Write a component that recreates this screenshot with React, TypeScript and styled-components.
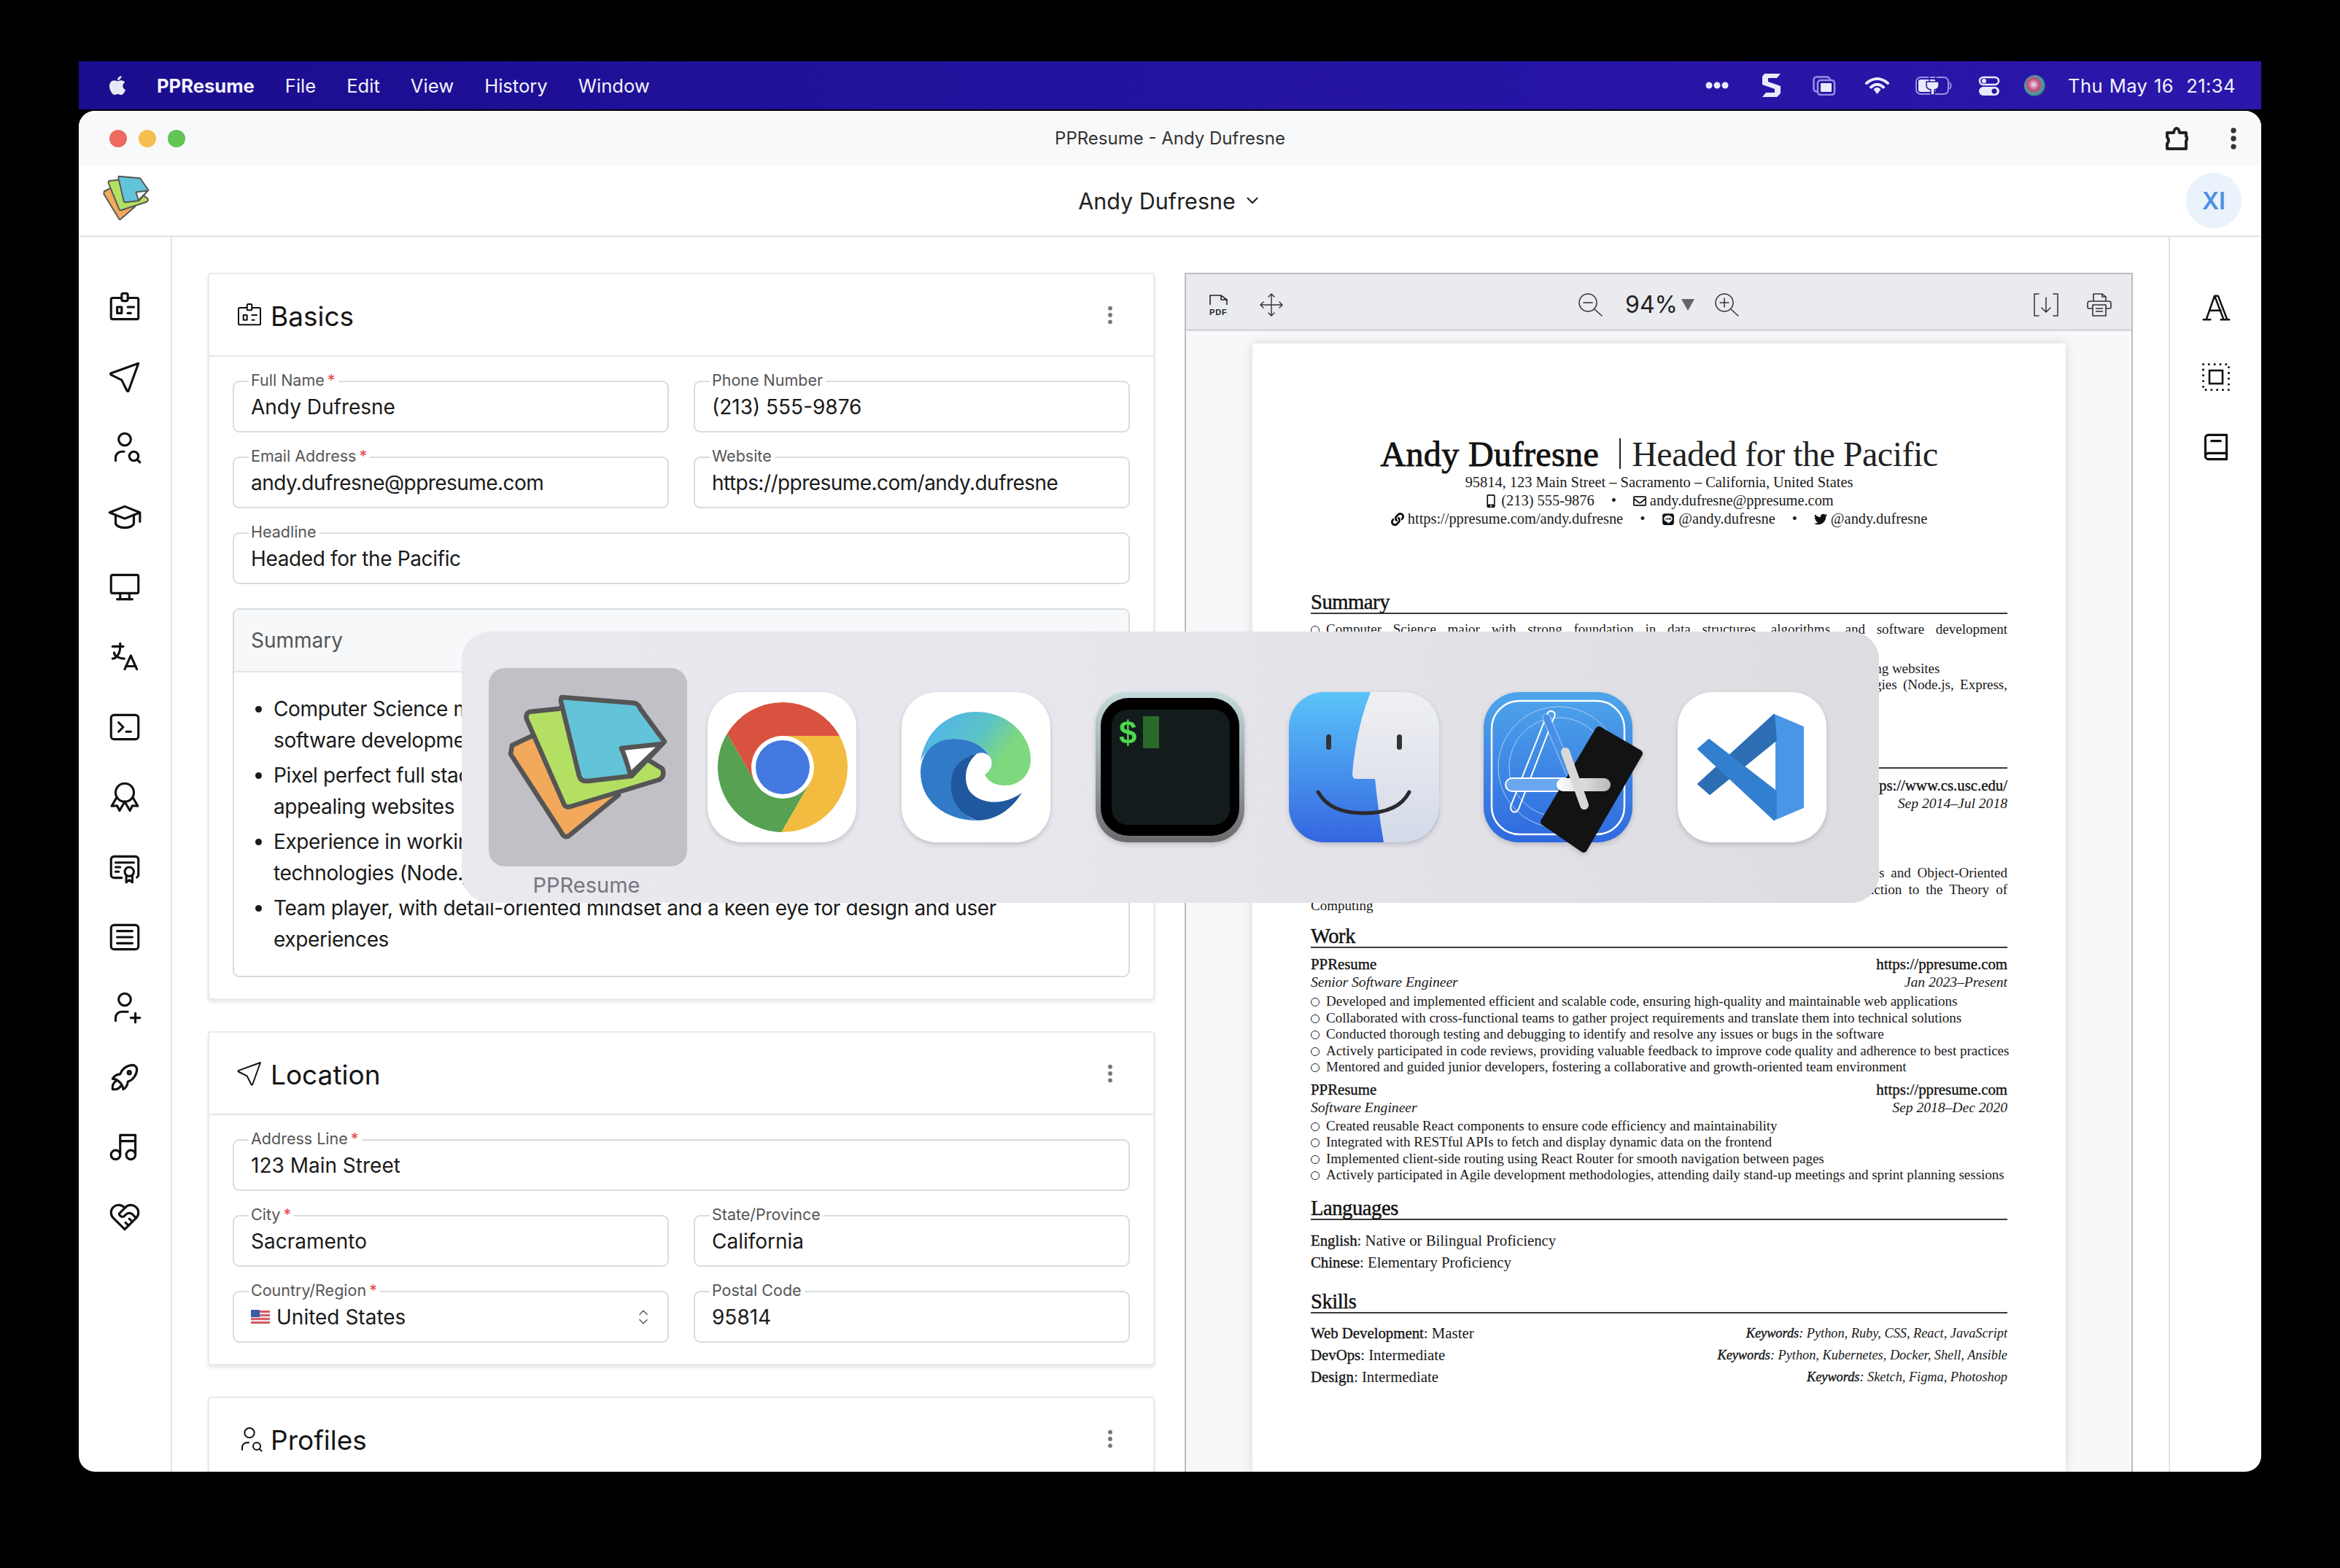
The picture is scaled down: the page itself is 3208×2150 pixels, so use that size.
import React from "react";
import styled, { createGlobalStyle } from "styled-components";
import { FaApple, FaLine, FaMobileAlt, FaRegEnvelope, FaTwitter, FaLink } from "react-icons/fa";
import {
  TbArticle,
  TbAward,
  TbBook2,
  TbCertificate,
  TbChevronDown,
  TbDeviceDesktop,
  TbDotsVertical,
  TbHeartHandshake,
  TbIdBadge2,
  TbLanguage,
  TbLocation,
  TbMusic,
  TbRocket,
  TbSchool,
  TbSelector,
  TbTerminal2,
  TbUserPlus,
  TbUserSearch,
} from "react-icons/tb";

const GlobalStyle = createGlobalStyle`
  html, body { margin: 0; padding: 0; background: #000; }
  * { box-sizing: border-box; }
`;

const Screen = styled.div`
  width: 3208px;
  height: 2150px;
  padding: 84px 108px 132px;
  background: #000;
  font-family: Inter, "Liberation Sans", sans-serif;
  display: flex;
  flex-direction: column;
  position: relative;
  overflow: hidden;
`;

/* mac menu bar */
const MenuBar = styled.div`
  height: 66px;
  flex: none;
  display: flex;
  align-items: center;
  padding: 0 35px 0 40px;
  background: linear-gradient(90deg, #1a0d8e 0%, #2314a0 50%, #2b17ab 100%);
  color: #f4f3fd;
  font-size: 25.6px;
`;

const AppleMark = styled.span`
  display: flex;
  width: 26px;
  margin-right: 41px;
  color: #e8e8f4;
  svg { display: block; }
`;

const MenuItem = styled.span<{ $bold?: boolean }>`
  margin-right: 42px;
  font-weight: ${(p) => (p.$bold ? 700 : 400)};
  white-space: nowrap;
`;

const StatusArea = styled.div`
  margin-left: auto;
  display: flex;
  align-items: center;
`;

const StatusSlot = styled.span<{ $gap: number }>`
  display: flex;
  margin-left: ${(p) => p.$gap}px;
  svg { display: block; }
`;

const Clock = styled.span`
  margin-left: 31px;
  white-space: nowrap;
  word-spacing: 1px;
  letter-spacing: 0.4px;
`;

/* app window */
const Window = styled.div`
  margin-top: 2px;
  flex: 1;
  min-height: 0;
  background: #fff;
  border-radius: 22px;
  overflow: hidden;
  display: flex;
  flex-direction: column;
`;

const TitleBar = styled.div`
  height: 75px;
  flex: none;
  background: #f8f9fa;
  display: grid;
  grid-template-columns: 1fr auto 1fr;
  align-items: center;
  padding: 0 42px;
`;

const Lights = styled.div`
  display: flex;
  gap: 16px;
`;

const Light = styled.span<{ $color: string }>`
  width: 24px;
  height: 24px;
  border-radius: 50%;
  background: ${(p) => p.$color};
`;

const WindowTitle = styled.div`
  font-size: 24px;
  color: #333;
  white-space: nowrap;
`;

const TitleActions = styled.div`
  display: flex;
  justify-content: flex-end;
  align-items: center;
  gap: 43px;
  margin-right: -23px;
  svg { display: block; }
`;

const TopBar = styled.div`
  height: 98px;
  flex: none;
  border-bottom: 2px solid #e4e4e4;
  display: grid;
  grid-template-columns: 1fr auto 1fr;
  align-items: center;
  padding: 0 27px;
`;

const Logo = styled.div`
  display: flex;
  margin: -8px 0 0 5px;
`;

const ResumeName = styled.div`
  display: flex;
  align-items: center;
  gap: 10px;
  font-size: 30.5px;
  color: #222;
`;

const Avatar = styled.div`
  justify-self: end;
  width: 76px;
  height: 76px;
  border-radius: 50%;
  background: #eaf2fb;
  color: #4a90e2;
  font-size: 32px;
  font-weight: 600;
  display: flex;
  align-items: center;
  justify-content: center;
`;

const Body = styled.div`
  flex: 1;
  min-height: 0;
  display: flex;
`;

const SideRail = styled.div<{ $right?: boolean }>`
  width: ${(p) => (p.$right ? 127 : 128)}px;
  flex: none;
  padding-top: 48px;
  color: #111;
  ${(p) => (p.$right ? "border-left: 2px solid #e4e4e4;" : "border-right: 2px solid #e4e4e4;")}
`;

const RailIcon = styled.div<{ $offset?: number }>`
  height: 96px;
  display: flex;
  align-items: center;
  justify-content: center;
  padding-left: ${(p) => p.$offset ?? 0}px;
`;

const Workspace = styled.div`
  flex: 1;
  min-width: 0;
  display: flex;
  gap: 41px;
  padding: 49px 49px 0 49px;
  overflow: hidden;
`;

const EditorColumn = styled.div`
  width: 1298px;
  flex: none;
  display: flex;
  flex-direction: column;
  gap: 43px;
`;

const Card = styled.section`
  flex: none;
  background: #fff;
  border: 2px solid #e8eaec;
  border-radius: 4px;
  box-shadow: 0 3px 5px rgba(0, 0, 0, 0.1);
`;

const CardHeader = styled.div`
  height: 113px;
  border-bottom: 2px solid #e4e6e8;
  display: flex;
  align-items: center;
  padding: 0 43px 0 35px;
  color: #111;
`;

const CardTitle = styled.h2`
  margin: 0 auto 0 9px;
  padding-top: 3px;
  font-size: 37px;
  font-weight: 400;
  color: #151515;
`;

const Kebab = styled.span`
  display: flex;
  color: #777;
`;

const CardBody = styled.div`
  padding: 33px 32px 29px;
  display: flex;
  flex-direction: column;
  gap: 33px;
`;

const FieldGrid = styled.div`
  display: grid;
  grid-template-columns: 1fr 1fr;
  column-gap: 34px;
  row-gap: 33px;
`;

const Field = styled.div<{ $wide?: boolean }>`
  position: relative;
  grid-column: ${(p) => (p.$wide ? "1 / -1" : "auto")};
  height: 71px;
  border: 2px solid #d8dcdf;
  border-radius: 9px;
  padding: 1px 23px 0;
  display: flex;
  align-items: center;
  gap: 9px;
  font-size: 28px;
  color: #1a1a1a;
  white-space: nowrap;
`;

const FieldValue = styled.span<{ $track?: number }>`
  letter-spacing: ${(p) => p.$track ?? 0}px;
`;

const FieldLabel = styled.label`
  position: absolute;
  top: -15px;
  left: 20px;
  padding: 0 4px 0 3px;
  background: #fff;
  font-size: 21.5px;
  line-height: 24px;
  color: #555;
`;

const Required = styled.span`
  color: #e5484d;
  margin-left: 4px;
`;

const SelectArrows = styled.span`
  margin-left: auto;
  margin-right: -5px;
  display: flex;
  color: #666;
`;

const SummaryBox = styled.div`
  border: 2px solid #d8dcdf;
  border-radius: 9px;
  overflow: hidden;
`;

const SummaryHead = styled.div`
  height: 86px;
  background: #f7f8fa;
  border-bottom: 2px solid #e4e6e8;
  display: flex;
  align-items: center;
  justify-content: space-between;
  padding: 0 36px 0 23px;
  font-size: 28px;
  color: #555;
`;

const SummaryList = styled.ul`
  margin: 0;
  padding: 28.5px 20px 28.5px 54px;
  font-size: 28px;
  line-height: 43px;
  letter-spacing: -0.38px;
  color: #1a1a1a;
  li { margin-top: 5px; }
  li:first-child { margin-top: 0; }
`;

/* pdf preview */
const PreviewPanel = styled.div`
  flex: 1;
  min-width: 0;
  background: #f7f8fa;
  border: 2px solid #bdbdbd;
  border-bottom: none;
  display: flex;
  flex-direction: column;
  overflow: hidden;
`;

const PdfToolbar = styled.div`
  height: 78px;
  flex: none;
  background: #e9ebee;
  border-bottom: 3px solid #d6d8db;
  display: grid;
  grid-template-columns: 1fr auto 1fr;
  align-items: center;
  padding: 8px 27px 0 26px;
  color: #333;
`;

const ToolGroup = styled.div<{ $align?: string; $gap: number; $inset?: number }>`
  display: flex;
  align-items: center;
  justify-content: ${(p) => p.$align ?? "flex-start"};
  gap: ${(p) => p.$gap}px;
  padding-left: ${(p) => p.$inset ?? 0}px;
  svg { display: block; }
`;

const Zoom = styled.span`
  font-size: 32px;
  color: #222;
  display: flex;
  align-items: center;
  gap: 5px;
  margin: 0 27px 0 31px;
  line-height: 1;
`;

const ZoomCaret = styled.span`
  width: 0;
  height: 0;
  border-left: 9px solid transparent;
  border-right: 9px solid transparent;
  border-top: 16px solid #666;
`;

const Sheet = styled.div`
  flex: 1;
  min-height: 0;
  background: #fff;
  margin: 17px 90px 0 91px;
  padding: 124px 80px 0 80px;
  box-shadow: 0 0 14px rgba(0, 0, 0, 0.14);
  font-family: "Liberation Serif", serif;
  font-size: 19px;
  color: #1a1a1a;
  white-space: nowrap;
`;

const NameRow = styled.div`
  height: 54px;
  display: flex;
  justify-content: center;
  align-items: center;
  font-size: 48px;
  letter-spacing: -0.5px;
  color: #222;
`;

const NameStrong = styled.span`
  color: #111;
  letter-spacing: 0.4px;
  -webkit-text-stroke: 0.9px #111;
`;

const NameBar = styled.span`
  width: 2px;
  height: 42px;
  margin: 0 15px 0 28px;
  background: #222;
`;

const ContactRow = styled.div`
  height: 25px;
  line-height: 25px;
  font-size: 20.4px;
  display: flex;
  justify-content: center;
  align-items: center;
  gap: 5px;
  svg { font-size: 18px; color: #111; flex: none; }
`;

const ContactDot = styled.span`
  margin: 0 18px;
`;

const SectionHead = styled.div<{ $top: number }>`
  margin-top: ${(p) => p.$top}px;
  height: 30px;
  border-bottom: 2px solid #3a3a3a;
  font-size: 28.5px;
  line-height: 27px;
  letter-spacing: -0.4px;
  color: #111;
  -webkit-text-stroke: 0.45px #111;
`;

const Bullet = styled.div<{ $top?: number; $h?: number }>`
  margin-top: ${(p) => p.$top ?? 0}px;
  height: ${(p) => p.$h ?? 22.5}px;
  line-height: ${(p) => p.$h ?? 22.5}px;
  display: flex;
  align-items: center;
  gap: 9px;
  &::before {
    content: "";
    width: 10px;
    height: 10px;
    flex: none;
    border: 1.5px solid #222;
    border-radius: 50%;
    margin-top: 2px;
  }
`;

const BulletText = styled.span`
  flex: 1;
  text-align: justify;
  text-align-last: justify;
`;

const PlainLine = styled.div<{ $top?: number }>`
  margin-top: ${(p) => p.$top ?? 0}px;
  height: 22.5px;
  line-height: 22.5px;
  text-align: justify;
  text-align-last: justify;
`;

const EntryRow = styled.div<{ $top?: number; $h?: number }>`
  margin-top: ${(p) => p.$top ?? 0}px;
  height: ${(p) => p.$h ?? 25}px;
  line-height: ${(p) => p.$h ?? 25}px;
  font-size: 20.8px;
  display: flex;
  justify-content: space-between;
`;

const EntryStrong = styled.span`
  color: #111;
  -webkit-text-stroke: 0.35px #111;
`;

const EntryItalic = styled.span<{ $small?: boolean }>`
  font-style: italic;
  font-size: ${(p) => (p.$small ? 18.3 : 19.6)}px;
`;

/* app switcher */
const Switcher = styled.div`
  position: absolute;
  left: 633px;
  top: 866px;
  width: 1943px;
  height: 372px;
  padding-left: 40px;
  border-radius: 38px;
  background: linear-gradient(90deg, #e9e9ef 0%, #e6e6ec 45%, #dcdce1 100%);
  display: flex;
  align-items: flex-start;
`;

const SwitcherCell = styled.div`
  position: relative;
  width: 266px;
  height: 100%;
  flex: none;
  display: flex;
  justify-content: center;
  padding-top: 83px;
  svg { display: block; overflow: visible; filter: drop-shadow(0 3px 3px rgba(0, 0, 0, 0.16)); }
`;

const ActiveTile = styled.div`
  position: absolute;
  top: 50px;
  left: -3px;
  width: 272px;
  height: 272px;
  border-radius: 22px;
  background: #c0c0c6;
  display: flex;
  align-items: center;
  justify-content: center;
  svg { filter: none; }
`;

const ActiveLabel = styled.div`
  position: absolute;
  top: 330px;
  left: -2px;
  right: 2px;
  text-align: center;
  font-size: 29px;
  line-height: 36px;
  color: #77777c;
`;

const stroke = 1.5;

const railLeft = [
  TbIdBadge2,
  TbLocation,
  TbUserSearch,
  TbSchool,
  TbDeviceDesktop,
  TbLanguage,
  TbTerminal2,
  TbAward,
  TbCertificate,
  TbArticle,
  TbUserPlus,
  TbRocket,
  TbMusic,
  TbHeartHandshake,
];

function SerifA() {
  return (
    <svg width="46" height="46" viewBox="0 0 24 24" fill="none" stroke="currentColor" strokeWidth="1.3" strokeLinecap="round" strokeLinejoin="round">
      <path d="M3 21h5M15.5 21h6M5 21 11 4h2.5l6.5 17M11 4l6.5 17M7.5 14.5h8" />
    </svg>
  );
}

function PaddingBox() {
  return (
    <svg width="38" height="38" viewBox="0 0 38 38" fill="none" stroke="currentColor">
      <rect x="1.5" y="1.5" width="35" height="35" strokeWidth="3" strokeDasharray="0.1 7.7" strokeLinecap="round" />
      <rect x="10" y="10" width="18" height="18" strokeWidth="2.6" />
    </svg>
  );
}

function PaperStack({ width, height }: { width: number; height: number }) {
  return (
    <svg width={width} height={height} viewBox="22 36 228 204" preserveAspectRatio="none" fill="none" stroke="#555" strokeWidth="6.5" strokeLinejoin="round">
      <path d="M32 108 L66 92 L178 176 L110 232 Q104 236 100 228 L30 120 Z" fill="#f2a95c" />
      <path d="M56 62 L104 57 L238 140 Q242 150 234 155 L112 192 Q104 194 102 186 L52 72 Q50 64 56 62 Z" fill="#b3df62" />
      <path d="M100 42 L200 50 Q206 52 208 58 L241 103 L196 150 L136 157 Q126 158 124 150 L100 52 Q98 44 100 42 Z" fill="#63c3d9" />
      <path d="M182 112 L238 106 L194 148 Q188 126 182 112 Z" fill="#fff" />
    </svg>
  );
}

function ChromeIcon() {
  return (
    <svg width="204" height="206" viewBox="0 0 204 206">
      <rect width="204" height="206" rx="48" fill="#fff" />
      <path d="M103 60 L181 60 A89 89 0 0 0 26.8 57 L65.8 124.5 A43 43 0 0 1 103 60 Z" fill="#d9523f" />
      <path d="M181 60 A89 89 0 0 1 101.2 192 L140.2 124.5 A43 43 0 0 0 103 60 Z" fill="#f3bc40" />
      <path d="M26.8 57 A89 89 0 0 0 101.2 192 L140.2 124.5 A43 43 0 0 1 65.8 124.5 Z" fill="#56a152" />
      <circle cx="103" cy="103" r="37" fill="#4379e0" />
    </svg>
  );
}

function EdgeIcon() {
  return (
    <svg width="204" height="206" viewBox="0 0 204 206">
      <defs>
        <linearGradient id="edgeTop" x1="0" y1="0" x2="1" y2="0.5">
          <stop offset="0.2" stopColor="#52b7e6" />
          <stop offset="0.55" stopColor="#5cc3c6" />
          <stop offset="0.85" stopColor="#7ed87e" />
        </linearGradient>
      </defs>
      <rect width="204" height="206" rx="48" fill="#fff" />
      <path d="M26 95 C32 52 66 27 102 27 C147 27 177 60 177 92 C177 115 160 128 142 128 C128 128 118 122 114 113 C122 108 126 100 122 90 C116 76 95 64 72 64 C52 64 34 78 26 95 Z" fill="url(#edgeTop)" />
      <path d="M122 90 C112 72 92 64 72 64 C46 64 26 82 26 110 C26 148 58 176 104 176 C84 172 70 150 70 125 C70 105 82 90 104 84 C112 82 118 84 122 90 Z" fill="#317ac8" />
      <path d="M104 176 C76 168 62 140 70 112 C74 98 88 88 104 84 C88 96 84 118 92 134 C102 150 134 160 165 138 C150 162 128 176 104 176 Z" fill="#20589f" />
    </svg>
  );
}

function TerminalIcon() {
  return (
    <svg width="204" height="206" viewBox="0 0 204 206">
      <defs>
        <linearGradient id="termEdge" x1="0" y1="0" x2="0" y2="1">
          <stop offset="0" stopColor="#c4dcdc" />
          <stop offset="0.5" stopColor="#9aa5a6" />
          <stop offset="1" stopColor="#6b6b6d" />
        </linearGradient>
      </defs>
      <rect width="204" height="206" rx="44" fill="url(#termEdge)" />
      <rect x="7" y="8" width="190" height="189" rx="38" fill="#000" />
      <rect x="22" y="24" width="162" height="158" rx="22" fill="#141b1d" />
      <text x="32" y="71" fontFamily="Liberation Sans" fontWeight="700" fontSize="44" fill="#4cd94c">$</text>
      <rect x="65" y="33" width="22" height="44" fill="#2a6b2a" />
    </svg>
  );
}

function FinderIcon() {
  return (
    <svg width="206" height="206" viewBox="0 0 206 206">
      <defs>
        <linearGradient id="finderBlue" x1="0" y1="0" x2="0" y2="1">
          <stop offset="0" stopColor="#5ac4f9" />
          <stop offset="1" stopColor="#3566e0" />
        </linearGradient>
        <linearGradient id="finderLight" x1="0" y1="0" x2="0" y2="1">
          <stop offset="0" stopColor="#f0f0f3" />
          <stop offset="1" stopColor="#d3dae8" />
        </linearGradient>
        <clipPath id="finderClip">
          <rect width="206" height="206" rx="48" />
        </clipPath>
      </defs>
      <g clipPath="url(#finderClip)">
        <rect width="206" height="206" fill="url(#finderBlue)" />
        <path d="M112 0 H206 V206 H130 Q122 160 118 119 H92 Q87 119 87 112 Q92 50 112 0 Z" fill="url(#finderLight)" />
      </g>
      <rect x="51" y="58" width="7" height="21" rx="3.5" fill="#333" />
      <rect x="148" y="58" width="7" height="21" rx="3.5" fill="#333" />
      <path d="M40 137 Q56 166 103 166 Q150 166 165 137" fill="none" stroke="#2a2a2e" strokeWidth="5" strokeLinecap="round" />
    </svg>
  );
}

function XcodeIcon() {
  return (
    <svg width="204" height="206" viewBox="0 0 204 206">
      <defs>
        <linearGradient id="xcodeBlue" x1="0" y1="0" x2="0" y2="1">
          <stop offset="0" stopColor="#4ea5ea" />
          <stop offset="1" stopColor="#2f69df" />
        </linearGradient>
        <linearGradient id="xcodeBar" x1="0" y1="0" x2="1" y2="0">
          <stop offset="0" stopColor="#fff" />
          <stop offset="1" stopColor="#b8b8b8" />
        </linearGradient>
      </defs>
      <rect width="204" height="206" rx="48" fill="url(#xcodeBlue)" />
      <rect x="11" y="12" width="182" height="183" rx="38" fill="none" stroke="#fff" strokeWidth="2.5" />
      <circle cx="103" cy="103" r="83" fill="none" stroke="#a9cdf5" strokeWidth="1" />
      <circle cx="103" cy="103" r="68" fill="none" stroke="#a9cdf5" strokeWidth="1" />
      <path d="M95 38 L48 160 Q45 166 40 164 Q35 160 38 154 L88 28 Q92 24 97 28 Q99 32 95 38 Z" fill="none" stroke="#fff" strokeWidth="2" />
      <path d="M86 35 L142 168" fill="none" stroke="#fff" strokeWidth="12" strokeOpacity="0.35" strokeLinecap="round" />
      <path d="M86 35 L142 168" fill="none" stroke="#4a8fe6" strokeWidth="9" strokeLinecap="round" />
      <rect x="30" y="118" width="144" height="18" rx="9" fill="#6aa7ee" stroke="#fff" strokeWidth="2" />
      <path d="M158 52 L213 84 L137 215 L83 178 Z" fill="#131313" stroke="#131313" strokeWidth="10" strokeLinejoin="round" />
      <rect x="100" y="118" width="74" height="18" rx="9" fill="url(#xcodeBar)" />
      <path d="M112 82 L138 155" fill="none" stroke="#d8d8d8" strokeWidth="12" strokeLinecap="round" />
    </svg>
  );
}

function VSCodeIcon() {
  return (
    <svg width="204" height="206" viewBox="0 0 204 206">
      <rect width="204" height="206" rx="48" fill="#fff" />
      <path d="M132 31 L172 48 V158 L132 175 L135 136 V66 Z" fill="#4a96e6" stroke="#4a96e6" strokeWidth="2" strokeLinejoin="round" />
      <path d="M132 31 L135 66 L44 140 L28 126 Z" fill="#2c6db3" stroke="#2c6db3" strokeWidth="2" strokeLinejoin="round" />
      <path d="M43 65 L135 136 V170 L132 175 L28 78 Z" fill="#327fd0" stroke="#327fd0" strokeWidth="2" strokeLinejoin="round" />
    </svg>
  );
}

function ExtensionIcon() {
  return (
    <svg width="32" height="34" viewBox="0 0 32 34" fill="none" stroke="#222" strokeWidth="4" strokeLinejoin="round">
      <path d="M3 9 H12 Q13 3 16 3 Q19 3 20 9 H29 V14 Q32 17 29 20 V31 H3 V24 Q7 20 3 15 Z" />
    </svg>
  );
}

function PdfGlyph() {
  return (
    <svg width="26" height="30" viewBox="0 0 26 30" fill="none" stroke="#222" strokeWidth="1.6">
      <path d="M1 15 V2 H16 L24 8 V15 M16 2 V8 H24" />
      <text x="0" y="29" fontFamily="Liberation Sans" fontWeight="700" fontSize="11" fill="#222" stroke="none" letterSpacing="0.8">PDF</text>
    </svg>
  );
}

function MoveGlyph() {
  return (
    <svg width="34" height="32" viewBox="0 0 34 32" fill="none" stroke="#333" strokeWidth="1.4" strokeLinecap="round" strokeLinejoin="round">
      <path d="M17 1 V31 M2 16 H32 M13 5 L17 1 L21 5 M13 27 L17 31 L21 27 M6 12 L2 16 L6 20 M28 12 L32 16 L28 20" />
    </svg>
  );
}

function MagnifierGlyph({ plus }: { plus?: boolean }) {
  return (
    <svg width="34" height="32" viewBox="0 0 34 32" fill="none" stroke="#333" strokeWidth="1.5" strokeLinecap="round">
      <circle cx="14" cy="13" r="12" />
      <path d="M23 22 L33 31 M8 13 H20" />
      {plus && <path d="M14 7 V19" />}
    </svg>
  );
}

function DownloadGlyph() {
  return (
    <svg width="34" height="32" viewBox="0 0 34 32" fill="none" stroke="#333" strokeWidth="1.5" strokeLinecap="round" strokeLinejoin="round">
      <path d="M7 1 H1 V31 H7 M27 1 H33 V31 H27 M17 6 V26 M11 20 L17 26 L23 20" />
    </svg>
  );
}

function PrintGlyph() {
  return (
    <svg width="34" height="32" viewBox="0 0 34 32" fill="none" stroke="#333" strokeWidth="1.6" strokeLinejoin="round">
      <path d="M9 11 V1 H21 L26 5 V11 M21 1 V5 H26" />
      <path d="M8 21 H3 Q1 21 1 19 V14 Q1 11 4 11 H30 Q33 11 33 14 V19 Q33 21 31 21 H26" />
      <path d="M8 16 H26 V31 H8 Z M12 21 H22 M12 25 H22" />
    </svg>
  );
}

function FlagGlyph() {
  return (
    <svg width="26" height="20" viewBox="0 0 26 20">
      <rect width="26" height="20" rx="2" fill="#e8e8ee" />
      <path d="M0 2.5 H26 M0 7.5 H26 M0 12.5 H26 M0 17.5 H26" stroke="#d9454d" strokeWidth="2.5" />
      <rect width="12" height="10" fill="#3b5aa6" />
    </svg>
  );
}

function StatusIcons() {
  const tint = "#ebeafb";
  return (
    <>
      <StatusSlot $gap={0}>
        <svg width="32" height="10" viewBox="0 0 32 10" fill={tint}>
          <circle cx="5" cy="5" r="4.5" />
          <circle cx="16" cy="5" r="4.5" />
          <circle cx="27" cy="5" r="4.5" />
        </svg>
      </StatusSlot>
      <StatusSlot $gap={46}>
        <svg width="25" height="32" viewBox="0 0 25 32" fill={tint}>
          <path d="M3 0 H25 L20 6 H8 V11 L25 17 V27 L20 32 H0 L5 26 H17 V21 L0 15 V4 Z" />
        </svg>
      </StatusSlot>
      <StatusSlot $gap={44}>
        <svg width="32" height="27" viewBox="0 0 32 27" fill="none" stroke="#9a90e8" strokeWidth="2.5">
          <rect x="1.5" y="1.5" width="22" height="20" rx="4" />
          <rect x="7" y="6" width="23" height="20" rx="4" fill="#2314a0" />
          <rect x="11" y="10" width="15" height="12" rx="1" fill={tint} stroke="none" />
        </svg>
      </StatusSlot>
      <StatusSlot $gap={39}>
        <svg width="35" height="25" viewBox="0 0 35 25" fill="none" stroke={tint} strokeWidth="4" strokeLinecap="round">
          <path d="M3 9 Q17.5 -3 32 9 M9 14.5 Q17.5 7 26 14.5" />
          <path d="M12.5 17.5 Q17.5 12 22.5 17.5 L17.5 24 Z" fill={tint} stroke="none" />
        </svg>
      </StatusSlot>
      <StatusSlot $gap={35}>
        <svg width="50" height="25" viewBox="0 0 50 25">
          <rect x="1" y="1" width="44" height="23" rx="6" fill="none" stroke="#9a90e8" strokeWidth="2" />
          <rect x="4" y="4" width="24" height="17" rx="3" fill={tint} />
          <path d="M47 8 Q50 12 47 17" fill="none" stroke="#9a90e8" strokeWidth="2" />
          <path d="M19 0 V7 M28 0 V7 M15 7 H32 V12 Q32 17 26 18 V25 H21 V18 Q15 17 15 12 Z" fill={tint} stroke="#2314a0" strokeWidth="1.5" />
        </svg>
      </StatusSlot>
      <StatusSlot $gap={36}>
        <svg width="30" height="27" viewBox="0 0 30 27">
          <rect x="2" y="2" width="26" height="10" rx="5" fill="none" stroke={tint} strokeWidth="2.5" />
          <circle cx="8" cy="7" r="3" fill={tint} />
          <rect x="1" y="15" width="28" height="12" rx="6" fill={tint} />
          <circle cx="22" cy="21" r="3.5" fill="#2314a0" />
        </svg>
      </StatusSlot>
      <StatusSlot $gap={33}>
        <svg width="29" height="29" viewBox="0 0 29 29">
          <defs>
            <radialGradient id="siriGlow" cx="0.45" cy="0.45" r="0.6">
              <stop offset="0" stopColor="#e8e8f0" />
              <stop offset="0.45" stopColor="#c84a78" />
              <stop offset="0.75" stopColor="#3fa3a0" />
              <stop offset="1" stopColor="#3c3f6e" />
            </radialGradient>
          </defs>
          <circle cx="14.5" cy="14.5" r="14.5" fill="url(#siriGlow)" />
        </svg>
      </StatusSlot>
    </>
  );
}

const DotIcon = () => <TbDotsVertical size={32} strokeWidth={2.4} />;

export default function App() {
  return (
    <Screen>
      <GlobalStyle />
      <MenuBar>
        <AppleMark>
          <FaApple size={30} />
        </AppleMark>
        <MenuItem $bold>PPResume</MenuItem>
        <MenuItem>File</MenuItem>
        <MenuItem>Edit</MenuItem>
        <MenuItem>View</MenuItem>
        <MenuItem>History</MenuItem>
        <MenuItem>Window</MenuItem>
        <StatusArea>
          <StatusIcons />
          <Clock>Thu May 16&nbsp; 21:34</Clock>
        </StatusArea>
      </MenuBar>

      <Window>
        <TitleBar>
          <Lights>
            <Light $color="#ec6a5e" />
            <Light $color="#f4bf4f" />
            <Light $color="#61c554" />
          </Lights>
          <WindowTitle>PPResume - Andy Dufresne</WindowTitle>
          <TitleActions>
            <ExtensionIcon />
            <TbDotsVertical size={38} strokeWidth={2.6} color="#333" />
          </TitleActions>
        </TitleBar>

        <TopBar>
          <Logo>
            <PaperStack width={66} height={63} />
          </Logo>
          <ResumeName>
            Andy Dufresne
            <TbChevronDown size={26} strokeWidth={2} />
          </ResumeName>
          <Avatar>XI</Avatar>
        </TopBar>

        <Body>
          <SideRail>
            {railLeft.map((Icon, i) => (
              <RailIcon key={i}>
                <Icon size={50} strokeWidth={stroke} />
              </RailIcon>
            ))}
          </SideRail>

          <Workspace>
            <EditorColumn>
              <Card>
                <CardHeader>
                  <TbIdBadge2 size={40} strokeWidth={1.2} />
                  <CardTitle>Basics</CardTitle>
                  <Kebab><DotIcon /></Kebab>
                </CardHeader>
                <CardBody>
                  <FieldGrid>
                    <Field>
                      <FieldLabel>Full Name<Required>*</Required></FieldLabel>
                      <FieldValue>Andy Dufresne</FieldValue>
                    </Field>
                    <Field>
                      <FieldLabel>Phone Number</FieldLabel>
                      <FieldValue>(213) 555-9876</FieldValue>
                    </Field>
                    <Field>
                      <FieldLabel>Email Address<Required>*</Required></FieldLabel>
                      <FieldValue $track={-0.55}>andy.dufresne@ppresume.com</FieldValue>
                    </Field>
                    <Field>
                      <FieldLabel>Website</FieldLabel>
                      <FieldValue $track={-0.55}>https://ppresume.com/andy.dufresne</FieldValue>
                    </Field>
                    <Field $wide>
                      <FieldLabel>Headline</FieldLabel>
                      <FieldValue $track={-0.37}>Headed for the Pacific</FieldValue>
                    </Field>
                  </FieldGrid>
                  <SummaryBox>
                    <SummaryHead>
                      Summary
                      <Kebab><DotIcon /></Kebab>
                    </SummaryHead>
                    <SummaryList>
                      <li>Computer Science major with strong foundation in data structures, algorithms, and<br />software development</li>
                      <li>Pixel perfect full stack web developer, with an expertise in building visually<br />appealing websites</li>
                      <li>Experience in working with a variety of front-end and back-end web<br />technologies (Node.js, Express, React, Vue.js)</li>
                      <li>Team player, with detail-oriented mindset and a keen eye for design and user<br />experiences</li>
                    </SummaryList>
                  </SummaryBox>
                </CardBody>
              </Card>

              <Card>
                <CardHeader>
                  <TbLocation size={40} strokeWidth={1.2} />
                  <CardTitle>Location</CardTitle>
                  <Kebab><DotIcon /></Kebab>
                </CardHeader>
                <CardBody>
                  <FieldGrid>
                    <Field $wide>
                      <FieldLabel>Address Line<Required>*</Required></FieldLabel>
                      <FieldValue>123 Main Street</FieldValue>
                    </Field>
                    <Field>
                      <FieldLabel>City<Required>*</Required></FieldLabel>
                      <FieldValue>Sacramento</FieldValue>
                    </Field>
                    <Field>
                      <FieldLabel>State/Province</FieldLabel>
                      <FieldValue>California</FieldValue>
                    </Field>
                    <Field>
                      <FieldLabel>Country/Region<Required>*</Required></FieldLabel>
                      <FlagGlyph />
                      <FieldValue>United States</FieldValue>
                      <SelectArrows><TbSelector size={30} strokeWidth={1.4} /></SelectArrows>
                    </Field>
                    <Field>
                      <FieldLabel>Postal Code</FieldLabel>
                      <FieldValue>95814</FieldValue>
                    </Field>
                  </FieldGrid>
                </CardBody>
              </Card>

              <Card>
                <CardHeader>
                  <TbUserSearch size={40} strokeWidth={1.2} />
                  <CardTitle>Profiles</CardTitle>
                  <Kebab><DotIcon /></Kebab>
                </CardHeader>
              </Card>
            </EditorColumn>

            <PreviewPanel>
              <PdfToolbar>
                <ToolGroup $gap={42} $inset={6}>
                  <PdfGlyph />
                  <MoveGlyph />
                </ToolGroup>
                <ToolGroup $gap={0}>
                  <MagnifierGlyph />
                  <Zoom>94%<ZoomCaret /></Zoom>
                  <MagnifierGlyph plus />
                </ToolGroup>
                <ToolGroup $gap={39} $align="flex-end">
                  <DownloadGlyph />
                  <PrintGlyph />
                </ToolGroup>
              </PdfToolbar>
              <Sheet>
                <NameRow>
                  <NameStrong>Andy Dufresne</NameStrong>
                  <NameBar />
                  Headed for the Pacific
                </NameRow>
                <ContactRow>95814, 123 Main Street – Sacramento – California, United States</ContactRow>
                <ContactRow>
                  <FaMobileAlt />(213) 555-9876
                  <ContactDot>•</ContactDot>
                  <FaRegEnvelope />andy.dufresne@ppresume.com
                </ContactRow>
                <ContactRow>
                  <FaLink />https://ppresume.com/andy.dufresne
                  <ContactDot>•</ContactDot>
                  <FaLine />@andy.dufresne
                  <ContactDot>•</ContactDot>
                  <FaTwitter />@andy.dufresne
                </ContactRow>

                <SectionHead $top={88}>Summary</SectionHead>
                <Bullet $top={10}>
                  <BulletText>Computer Science major with strong foundation in data structures, algorithms, and software development</BulletText>
                </Bullet>
                <Bullet $top={31}>Pixel perfect full stack web developer, with an expertise in building functional and visually appealing websites</Bullet>
                <Bullet>
                  <BulletText>Experience in working with a variety of front-end and back-end languages and web technologies (Node.js, Express,</BulletText>
                </Bullet>
                <Bullet>Team player, with detail-oriented mindset and a keen eye for design and user experiences</Bullet>

                <SectionHead $top={51}>Education</SectionHead>
                <EntryRow $top={10}>
                  <EntryStrong>University of Southern California</EntryStrong>
                  <EntryStrong>https://www.cs.usc.edu/</EntryStrong>
                </EntryRow>
                <EntryRow>
                  <EntryItalic>Bachelor, Computer Science</EntryItalic>
                  <EntryItalic>Sep 2014–Jul 2018</EntryItalic>
                </EntryRow>
                <PlainLine $top={72}>Courses: Data Structures, Algorithms, Operating Systems, Computer Networks, Database Systems and Object-Oriented</PlainLine>
                <PlainLine>Programming, Software Engineering, Computer Architecture, Discrete Mathematics, and Introduction to the Theory of</PlainLine>
                <div>Computing</div>

                <SectionHead $top={17}>Work</SectionHead>
                <EntryRow $top={9}>
                  <EntryStrong>PPResume</EntryStrong>
                  <EntryStrong>https://ppresume.com</EntryStrong>
                </EntryRow>
                <EntryRow>
                  <EntryItalic>Senior Software Engineer</EntryItalic>
                  <EntryItalic>Jan 2023–Present</EntryItalic>
                </EntryRow>
                <Bullet $top={3}>Developed and implemented efficient and scalable code, ensuring high-quality and maintainable web applications</Bullet>
                <Bullet>Collaborated with cross-functional teams to gather project requirements and translate them into technical solutions</Bullet>
                <Bullet>Conducted thorough testing and debugging to identify and resolve any issues or bugs in the software</Bullet>
                <Bullet>Actively participated in code reviews, providing valuable feedback to improve code quality and adherence to best practices</Bullet>
                <Bullet>Mentored and guided junior developers, fostering a collaborative and growth-oriented team environment</Bullet>
                <EntryRow $top={6}>
                  <EntryStrong>PPResume</EntryStrong>
                  <EntryStrong>https://ppresume.com</EntryStrong>
                </EntryRow>
                <EntryRow>
                  <EntryItalic>Software Engineer</EntryItalic>
                  <EntryItalic>Sep 2018–Dec 2020</EntryItalic>
                </EntryRow>
                <Bullet $top={2}>Created reusable React components to ensure code efficiency and maintainability</Bullet>
                <Bullet>Integrated with RESTful APIs to fetch and display dynamic data on the frontend</Bullet>
                <Bullet>Implemented client-side routing using React Router for smooth navigation between pages</Bullet>
                <Bullet>Actively participated in Agile development methodologies, attending daily stand-up meetings and sprint planning sessions</Bullet>

                <SectionHead $top={20}>Languages</SectionHead>
                <EntryRow $top={13} $h={30}>
                  <span><EntryStrong>English</EntryStrong>: Native or Bilingual Proficiency</span>
                </EntryRow>
                <EntryRow $h={30}>
                  <span><EntryStrong>Chinese</EntryStrong>: Elementary Proficiency</span>
                </EntryRow>

                <SectionHead $top={25}>Skills</SectionHead>
                <EntryRow $top={12} $h={30}>
                  <span><EntryStrong>Web Development</EntryStrong>: Master</span>
                  <EntryItalic $small><EntryStrong>Keywords</EntryStrong>: Python, Ruby, CSS, React, JavaScript</EntryItalic>
                </EntryRow>
                <EntryRow $h={30}>
                  <span><EntryStrong>DevOps</EntryStrong>: Intermediate</span>
                  <EntryItalic $small><EntryStrong>Keywords</EntryStrong>: Python, Kubernetes, Docker, Shell, Ansible</EntryItalic>
                </EntryRow>
                <EntryRow $h={30}>
                  <span><EntryStrong>Design</EntryStrong>: Intermediate</span>
                  <EntryItalic $small><EntryStrong>Keywords</EntryStrong>: Sketch, Figma, Photoshop</EntryItalic>
                </EntryRow>
              </Sheet>
            </PreviewPanel>
          </Workspace>

          <SideRail $right>
            <RailIcon><SerifA /></RailIcon>
            <RailIcon><PaddingBox /></RailIcon>
            <RailIcon><TbBook2 size={50} strokeWidth={stroke} /></RailIcon>
          </SideRail>
        </Body>
      </Window>

      <Switcher>
        <SwitcherCell>
          <ActiveTile>
            <PaperStack width={228} height={204} />
          </ActiveTile>
          <ActiveLabel>PPResume</ActiveLabel>
        </SwitcherCell>
        <SwitcherCell><ChromeIcon /></SwitcherCell>
        <SwitcherCell><EdgeIcon /></SwitcherCell>
        <SwitcherCell><TerminalIcon /></SwitcherCell>
        <SwitcherCell><FinderIcon /></SwitcherCell>
        <SwitcherCell><XcodeIcon /></SwitcherCell>
        <SwitcherCell><VSCodeIcon /></SwitcherCell>
      </Switcher>
    </Screen>
  );
}
